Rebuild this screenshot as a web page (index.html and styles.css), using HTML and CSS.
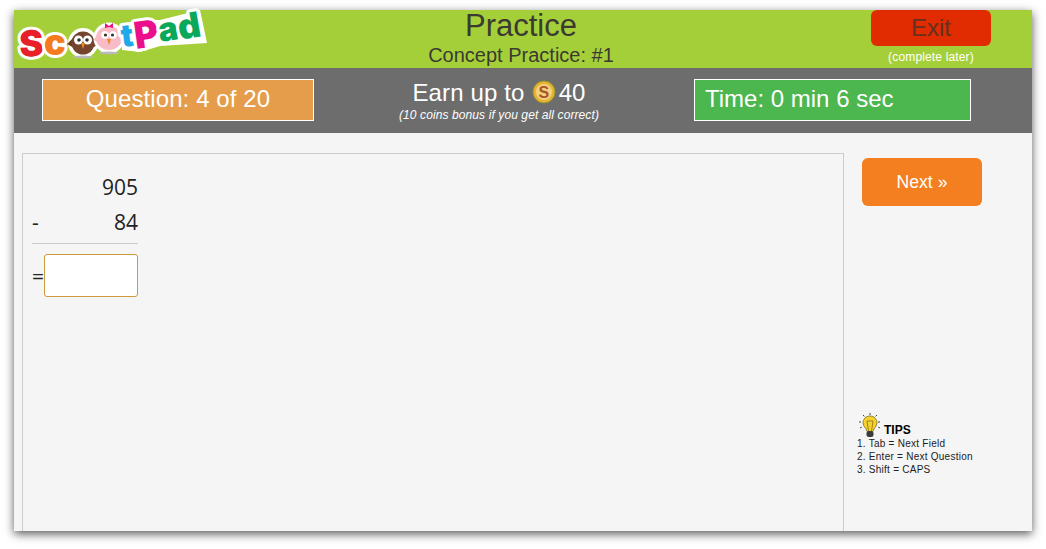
FILE: index.html
```html
<!DOCTYPE html>
<html lang="en">
<head>
    <meta charset="UTF-8">
    <title>ScootPad Practice</title>
    <link rel="stylesheet" href="styles.css">
</head>
<body>
    <div class="page">
        <div class="top-bar">
            <svg class="logo" width="200" height="58" viewBox="0 0 200 58">
                <polygon class="logo-back" points="105,14 123,10 143,10 183,0 190,33 143,36 123,42 105,40"/>
                <text class="logo-letter red" x="3" y="47" font-size="36" transform="rotate(-3 3 47)">S</text>
                <text class="logo-letter orange" x="27" y="45" font-size="36">c</text>
                <g>
                    <circle class="halo" cx="66" cy="33" r="15"/>
                    <ellipse class="owl-shadow" cx="66" cy="47" rx="10" ry="1.500"/>
                    <path class="wing" d="M56 28 L50 34 L57 38 Z M76 28 L82 34 L75 38 Z"/>
                    <ellipse class="owl-body" cx="66" cy="33" rx="11.500" ry="11.500"/>
                    <circle class="eye" cx="61.500" cy="30" r="4.500"/>
                    <circle class="eye" cx="70.500" cy="30" r="4.500"/>
                    <circle class="pupil" cx="62" cy="30" r="1.800"/>
                    <circle class="pupil" cx="70" cy="30" r="1.800"/>
                    <path class="beak" d="M64 33 L68 33 L66 39 Z"/>
                </g>
                <g>
                    <circle class="halo" cx="92" cy="28" r="15.500"/>
                    <ellipse class="owl-shadow" cx="92" cy="43" rx="10" ry="1.500"/>
                    <path class="wing-pink" d="M82 21 L77 30 L84 34 L100 34 L108 30 L102 21 Z"/>
                    <ellipse class="owl-body-pink" cx="92" cy="28" rx="13" ry="12"/>
                    <path class="bow" d="M88 13 L92 16 L96 13 L96 18 L92 17 L88 18 Z"/>
                    <circle class="eye" cx="88" cy="25" r="3.800"/>
                    <circle class="eye" cx="96" cy="25" r="3.800"/>
                    <circle class="pupil" cx="88.500" cy="25" r="1.600"/>
                    <circle class="pupil" cx="95.500" cy="25" r="1.600"/>
                    <path class="beak" d="M90 29 L94 29 L92 35 Z"/>
                </g>
                <text class="logo-letter blue" x="105" y="37" font-size="31" transform="rotate(-6 105 37)">t</text>
                <text class="logo-letter magenta" x="119" y="39" font-size="37" transform="rotate(-8 119 39)">P</text>
                <text class="logo-letter green" x="143" y="32" font-size="33" transform="rotate(-9 143 32)">a</text>
                <text class="logo-letter green" x="163" y="30" font-size="35" transform="rotate(-10 163 30)">d</text>
            </svg>
            <div class="title-block">
                <h1>Practice</h1>
                <h2>Concept Practice: #1</h2>
            </div>
            <div class="exit-block">
                <button class="exit-btn">Exit</button>
                <span class="exit-note">(complete later)</span>
            </div>
        </div>

        <div class="status-bar">
            <div class="question-box">Question: 4 of 20</div>
            <div class="earn">
                <div class="earn-line">
                    <span>Earn up to</span>
                    <svg class="coin" width="24" height="24" viewBox="0 0 24 24">
                        <circle cx="12" cy="12" r="11" fill="#e9b234" stroke="#8c9a2a" stroke-width="1"/>
                        <circle cx="12" cy="12" r="8" fill="#f3d27c"/>
                        <text x="12" y="17.500" text-anchor="middle" class="coin-s">S</text>
                    </svg>
                    <span>40</span>
                </div>
                <div class="earn-note">(10 coins bonus if you get all correct)</div>
            </div>
            <div class="time-box">Time: 0 min 6 sec</div>
        </div>

        <div class="content">
            <div class="work-panel">
                <div class="problem">
                    <div class="problem-row"><span></span><span>905</span></div>
                    <div class="problem-row"><span>-</span><span>84</span></div>
                    <div class="answer-row">
                        <span>=</span>
                        <input class="answer" type="text">
                    </div>
                </div>
            </div>
            <div class="side">
                <button class="next-btn">Next »</button>
                <div class="tips">
                    <div class="tips-head">
                        <svg width="22" height="25" viewBox="0 0 22 25">
                            <path class="rays" d="M11 0V2 M4 2L6 4 M18 2L16 4 M0 9H3 M19 9H22 M1 15L3 14 M21 15L19 14"/>
                            <path class="bulb" d="M11 3C6.500 3 4 6.500 4 10C4 13.500 7.500 15 8 18.500H14C14.500 15 18 13.500 18 10C18 6.500 15.500 3 11 3Z"/>
                            <path class="filament" d="M9.500 18L8 8H14L12.500 18"/>
                            <rect class="bulb-base" x="7.500" y="18" width="7" height="6" rx="2.500"/>
                        </svg>
                        <b>TIPS</b>
                    </div>
                    <div>1. Tab = Next Field</div>
                    <div>2. Enter = Next Question</div>
                    <div>3. Shift = CAPS</div>
                </div>
            </div>
        </div>
    </div>
</body>
</html>
```

FILE: styles.css
```css
html, body {
    margin: 0;
    padding: 0;
    background-color: #ffffff;
    height: 549px;
    overflow: hidden;
}

body {
    font-family: "Liberation Sans", Arial, sans-serif;
    padding: 10px 14px 18px;
    box-sizing: border-box;
}

.page {
    width: 1018px;
    height: 521px;
    display: flex;
    flex-direction: column;
    background-color: #f5f5f5;
    box-shadow: 0 3px 9px rgba(0, 0, 0, 0.65);
}

/* top green bar */
.top-bar {
    height: 58px;
    background-color: #a5cf38;
    display: grid;
    grid-template-columns: 1fr 320px 1fr;
    color: #3a3a32;
}

.logo {
    margin-left: 3px;
    display: block;
    overflow: visible;
}

.logo-back {
    fill: #ffffff;
}

.logo-letter {
    font-family: Inter, "Liberation Sans", Arial, sans-serif;
    font-weight: 900;
    stroke: #ffffff;
    stroke-width: 6px;
    stroke-linejoin: round;
    paint-order: stroke;
}

.red { fill: #e8202a; }
.orange { fill: #f47b20; }
.blue { fill: #1fa9e8; }
.magenta { fill: #ec0f8c; }
.green { fill: #0aa85a; }

.halo { fill: #ffffff; }
.owl-shadow { fill: #b9b9b9; }
.wing { fill: #6b3a22; }
.wing-pink { fill: #f6b6c0; }
.owl-body { fill: #74452c; }
.owl-body-pink { fill: #f9bcc6; }
.bow { fill: #e9157f; }
.eye { fill: #ffffff; }
.pupil { fill: #333333; }
.beak { fill: #f08a24; }

.title-block {
    text-align: center;
    margin-left: -4px;
}

h1 {
    margin: 0;
    font-size: 31px;
    font-weight: normal;
    line-height: 31px;
    margin-bottom: -1px;
}

h2 {
    margin: 4px 0 0;
    font-size: 20px;
    font-weight: normal;
    line-height: 23px;
}

.exit-block {
    display: flex;
    flex-direction: column;
    align-items: flex-end;
    padding-right: 41px;
}

.exit-btn {
    width: 120px;
    height: 36px;
    border: none;
    border-radius: 6px;
    background-color: #e12b00;
    color: #66301f;
    font-family: inherit;
    font-size: 24px;
    padding: 0;
}

.exit-note {
    width: 120px;
    text-align: center;
    font-size: 12px;
    letter-spacing: 0.15px;
    line-height: 14px;
    margin-top: 4px;
    color: #ffffff;
}

/* grey status bar */
.status-bar {
    height: 65px;
    background-color: #6d6d6d;
    color: #ffffff;
    display: flex;
    align-items: flex-start;
    padding: 11px 0 0 28px;
    box-sizing: border-box;
}

.question-box,
.time-box {
    height: 42px;
    box-sizing: border-box;
    border: 1px solid #ffffff;
    font-size: 24px;
    line-height: 38px;
}

.question-box {
    width: 272px;
    background-color: #e59d4b;
    text-align: center;
    letter-spacing: 0.1px;
}

.time-box {
    width: 277px;
    margin-left: 10px;
    background-color: #4cb64f;
    padding-left: 10px;
}

.earn {
    width: 370px;
    text-align: center;
}

.earn-line {
    font-size: 24px;
    letter-spacing: 0.15px;
    line-height: 28px;
    display: flex;
    justify-content: center;
    align-items: center;
    gap: 7px;
}

.coin {
    margin-right: -4px;
    margin-top: -2px;
}

.coin-s {
    font-family: "Liberation Sans", Arial, sans-serif;
    font-size: 16px;
    font-weight: bold;
    fill: #a8552f;
}

.earn-note {
    font-size: 12px;
    letter-spacing: 0.1px;
    font-style: italic;
    line-height: 14px;
    margin-top: 1px;
}

/* question area */
.content {
    flex: 1;
    display: flex;
    padding: 20px 0 0 8px;
    min-height: 0;
}

.work-panel {
    width: 822px;
    box-sizing: border-box;
    border: 1px solid #cccccc;
    border-bottom: none;
    padding: 16px 0 0 9px;
}

.problem {
    width: 106px;
    font-family: "Open Sans", sans-serif;
    font-size: 21px;
    color: #222222;
}

.problem-row {
    display: flex;
    justify-content: space-between;
    height: 35px;
    line-height: 35px;
}

.problem-row + .problem-row {
    border-bottom: 1px solid #cccccc;
    height: 38px;
    margin-bottom: 10px;
}

.answer-row {
    display: flex;
    justify-content: space-between;
    align-items: center;
}

.answer {
    width: 94px;
    height: 43px;
    box-sizing: border-box;
    border: 1px solid #cf9a3f;
    border-radius: 3px;
    background-color: #ffffff;
    padding: 0;
}

.side {
    flex: 1;
    padding: 5px 0 0 18px;
}

.next-btn {
    width: 120px;
    height: 48px;
    border: none;
    border-radius: 6px;
    background-color: #f47f20;
    color: #ffffff;
    font-family: inherit;
    font-size: 17.600px;
    padding: 0;
    display: block;
}

.tips {
    margin-top: 207px;
    margin-left: -5px;
    font-size: 10px;
    line-height: 13px;
    letter-spacing: 0.25px;
    color: #222222;
}

.tips-head {
    display: flex;
    align-items: flex-end;
    gap: 3px;
    height: 24px;
    margin-left: 2px;
    letter-spacing: 0;
}

.tips-head svg {
    flex: none;
    margin-bottom: -1px;
}

.tips-head b {
    font-size: 12px;
    line-height: 14px;
    color: #000000;
}

.rays {
    stroke: #444444;
    stroke-width: 1px;
    stroke-dasharray: 2 1;
    fill: none;
}

.bulb { fill: #f7d22c; stroke: #7a6a1c; stroke-width: 0.8px; }
.filament { fill: none; stroke: #9a8420; stroke-width: 1px; }
.bulb-base { fill: #3a3a3a; }
```
